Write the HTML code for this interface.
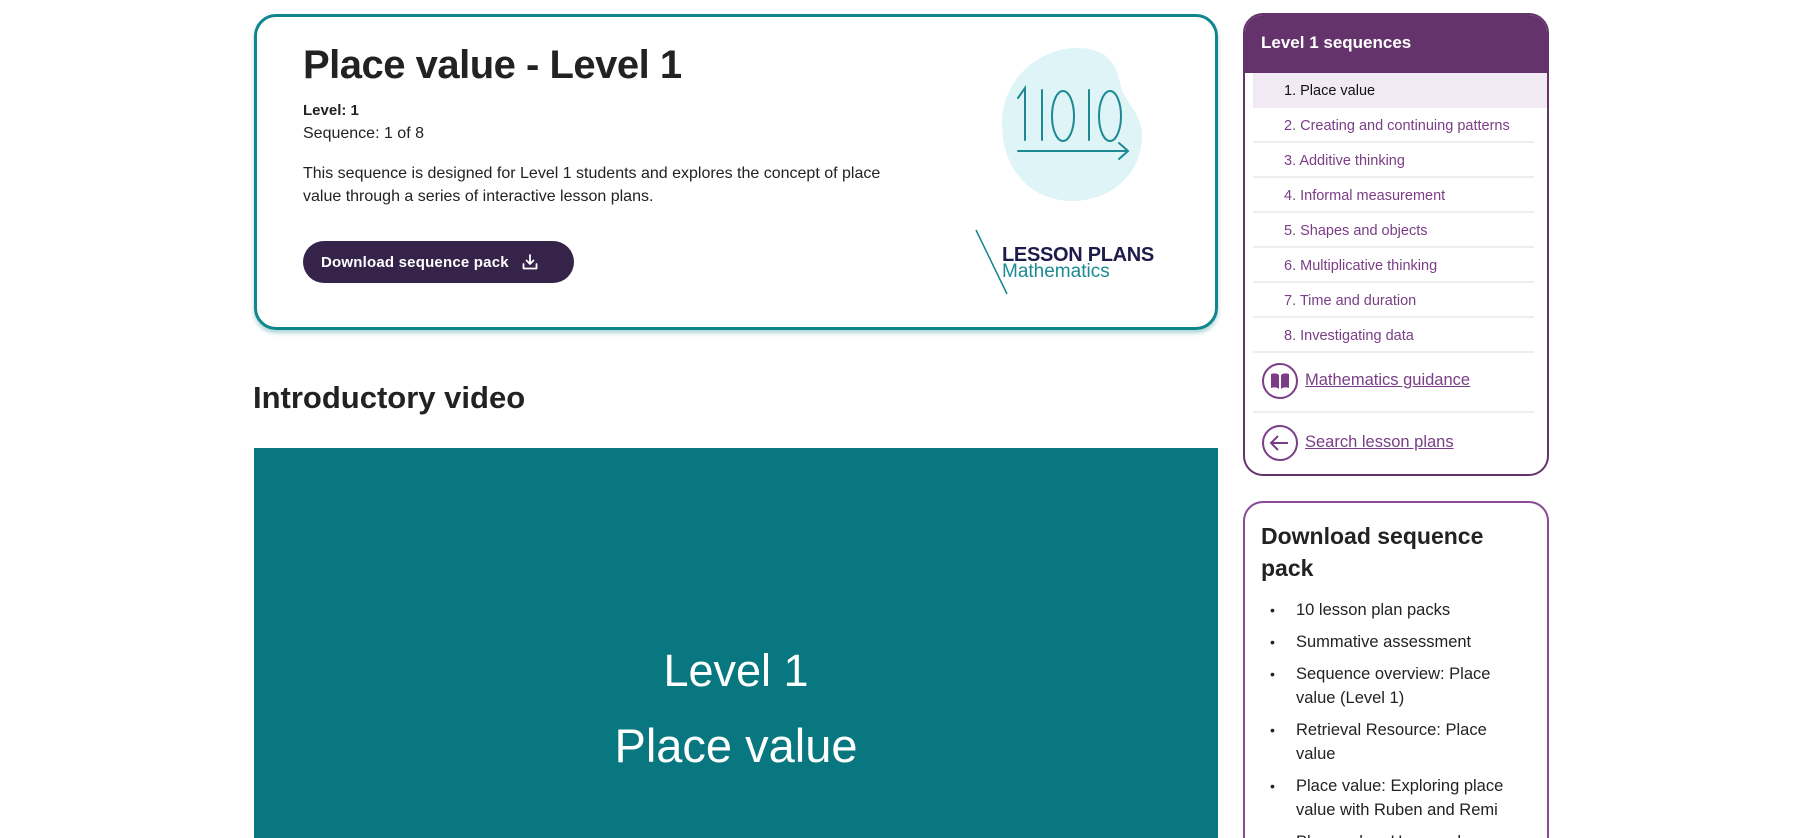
<!DOCTYPE html>
<html><head><meta charset="utf-8"><style>
*{box-sizing:border-box;margin:0;padding:0}
html,body{width:1802px;height:838px;overflow:hidden}
body{background:#fff;font-family:"Liberation Sans",sans-serif;color:#1f1f1f;position:relative}
.abs{position:absolute}
.card{left:254px;top:14px;width:964px;height:316px;border:3px solid #0e868c;border-radius:22px;box-shadow:0 3px 4px rgba(14,134,140,.35)}
h1{position:absolute;left:303px;top:43px;font-size:40px;font-weight:bold;letter-spacing:-0.5px;color:#222}
.t{position:absolute;left:303px;font-size:16px;color:#222}
.btn{left:303px;top:241px;width:271px;height:42px;border-radius:21px;background:#35234a;color:#fff;font-weight:bold;font-size:15px;display:flex;align-items:center;padding-left:18px;letter-spacing:.2px}
.side{left:1243px;top:13px;width:306px;height:463px;border:2px solid #64336b;border-radius:20px;overflow:hidden}
.sh{height:58px;background:#64336b;color:#fff;font-weight:bold;font-size:17px;padding:18px 0 0 16px}
.it{position:absolute;left:8px;width:281px;height:35px;font-size:14.5px;color:#7a3e86;padding:10px 0 0 31px;border-bottom:2px solid #eee}
.side2{left:1243px;top:501px;width:306px;height:420px;border:2px solid #8a4a99;border-radius:20px}
.li{position:absolute;left:1296px;font-size:16.5px;color:#222;line-height:24px}
.li:before{content:"•";position:absolute;left:-26px;font-size:14px}
</style></head><body>
<div class="abs card"></div>
<h1>Place value - Level 1</h1>
<div class="t" style="top:102px;font-weight:bold;font-size:15px">Level: 1</div>
<div class="t" style="top:125px">Sequence: 1 of 8</div>
<div class="t" style="top:162px;line-height:23px;width:615px">This sequence is designed for Level 1 students and explores the concept of place value through a series of interactive lesson plans.</div>
<div class="abs btn">Download sequence pack
<svg style="margin-left:12px" width="18" height="18" viewBox="0 0 18 18" fill="none" stroke="#fff" stroke-width="1.8" stroke-linecap="round" stroke-linejoin="round"><path d="M9 2v9M5.5 7.5L9 11l3.5-3.5M2.5 11v4.5h13V11"/></svg></div>
<svg class="abs" style="left:990px;top:40px" width="190" height="175" viewBox="0 0 190 175">
<path d="M88 8c25 0 38 12 42 35 3 18 22 30 22 52 0 42-34 66-70 66-40 0-70-30-70-78C12 40 48 8 88 8z" fill="#dff4f7"/>
<g stroke="#1b8a94" stroke-width="2" fill="none" stroke-linecap="round">
<path d="M28 58l7-10v52M52 50v50"/><ellipse cx="73" cy="76" rx="11" ry="25"/><path d="M99 50v50"/><ellipse cx="120" cy="76" rx="11" ry="25"/>
<path d="M28 111h110M129 103l9 8-9 8"/></g></svg>
<svg class="abs" style="left:974px;top:228px" width="36" height="68"><path d="M2 2L33 66" stroke="#0e868c" stroke-width="1.5"/></svg>
<div class="abs" style="left:1002px;top:244px;font-size:20px;font-weight:bold;color:#1e1a4a;letter-spacing:-.3px">LESSON PLANS</div>
<div class="abs" style="left:1002px;top:261px;font-size:19px;color:#1b8a94">Mathematics</div>
<div class="abs" style="left:253px;top:380px;font-size:31px;font-weight:bold;color:#222">Introductory video</div>
<div class="abs" style="left:254px;top:448px;width:964px;height:400px;background:#09777f"></div>
<div class="abs" style="left:254px;top:645px;width:964px;text-align:center;color:#fff;font-size:45px">Level 1</div>
<div class="abs" style="left:254px;top:718px;width:964px;text-align:center;color:#fff;font-size:47px">Place value</div>
<div class="abs side"><div class="sh">Level 1 sequences</div>
<div class="it" style="top:58px;left:8px;width:296px;background:#f1e9f3;color:#111;border:none;padding-left:31px">1. Place value</div>
<div class="it" style="top:93px">2. Creating and continuing patterns</div>
<div class="it" style="top:128px">3. Additive thinking</div>
<div class="it" style="top:163px">4. Informal measurement</div>
<div class="it" style="top:198px">5. Shapes and objects</div>
<div class="it" style="top:233px">6. Multiplicative thinking</div>
<div class="it" style="top:268px">7. Time and duration</div>
<div class="it" style="top:303px">8. Investigating data</div>
<div class="abs" style="left:8px;top:396px;width:281px;border-bottom:2px solid #eee"></div>
<svg class="abs" style="left:16px;top:347px" width="38" height="38"><circle cx="19" cy="19" r="17" fill="none" stroke="#7a3e86" stroke-width="2"/><path d="M10 12c3-1 6-1 8 1v14c-2-2-5-2-8-1zM28 12c-3-1-6-1-8 1v14c2-2 5-2 8-1z" fill="#7a3e86"/></svg>
<div class="abs" style="left:60px;top:356px;font-size:16.5px;color:#7a3e86;text-decoration:underline">Mathematics guidance</div>
<svg class="abs" style="left:16px;top:409px" width="38" height="38"><circle cx="19" cy="19" r="17" fill="none" stroke="#7a3e86" stroke-width="2"/><path d="M27 19H11M17 12l-7 7 7 7" fill="none" stroke="#7a3e86" stroke-width="2"/></svg>
<div class="abs" style="left:60px;top:418px;font-size:16.5px;color:#7a3e86;text-decoration:underline">Search lesson plans</div>
</div>
<div class="abs side2"></div>
<div class="abs" style="left:1261px;top:520px;font-size:23px;font-weight:bold;line-height:32px;color:#222;width:260px">Download sequence pack</div>
<div class="li" style="top:598px">10 lesson plan packs</div>
<div class="li" style="top:630px">Summative assessment</div>
<div class="li" style="top:662px;width:220px">Sequence overview: Place value (Level 1)</div>
<div class="li" style="top:718px;width:220px">Retrieval Resource: Place value</div>
<div class="li" style="top:774px;width:230px">Place value: Exploring place value with Ruben and Remi</div>
<div class="li" style="top:830px">Place value: Hops and</div>
</body></html>
